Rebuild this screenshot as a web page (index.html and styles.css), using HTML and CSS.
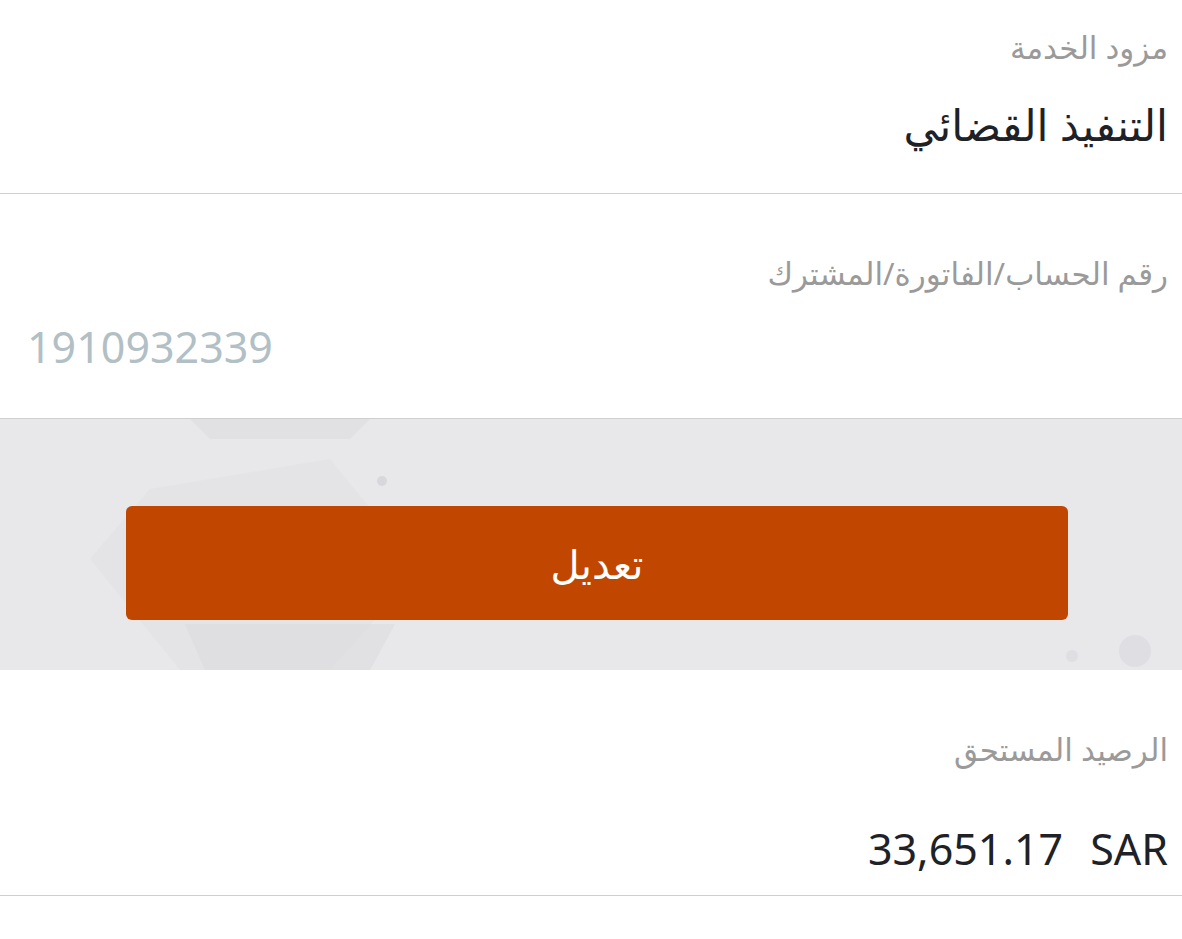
FILE: index.html
```html
<!DOCTYPE html>
<html lang="ar" dir="rtl">
<head>
  <meta charset="UTF-8">
  <title>تفاصيل الفاتورة</title>
  <link rel="stylesheet" href="styles.css">
</head>
<body>

  <div class="field">
    <div class="field-label">مزود الخدمة</div>
    <div class="field-value">التنفيذ القضائي</div>
  </div>

  <div class="field field-account">
    <div class="field-label">رقم الحساب/الفاتورة/المشترك</div>
    <div class="field-value account-number">1910932339</div>
  </div>

  <!-- action band with faint hexagon pattern -->
  <div class="action-band">
    <svg class="band-pattern" width="1182" height="251" viewBox="0 0 1182 251" aria-hidden="true">
      <polygon points="190,0 370,0 350,20 210,20" fill="#dcdce0" opacity="0.6"/>
      <polygon points="150,70 330,40 420,150 330,251 180,251 90,140" fill="#e0e0e4" opacity="0.45"/>
      <polygon points="185,205 395,205 370,251 205,251" fill="#dadade" opacity="0.5"/>
      <circle cx="382" cy="62" r="5" fill="#d8d8dc"/>
      <circle cx="1135" cy="232" r="16" fill="#dedee3"/>
      <circle cx="1072" cy="237" r="6" fill="#dedee3"/>
    </svg>
    <button class="edit-btn" type="button">تعديل</button>
  </div>

  <div class="field field-balance">
    <div class="field-label">الرصيد المستحق</div>
    <div class="field-value balance"><span>33,651.17</span><span>SAR</span></div>
  </div>

</body>
</html>
```

FILE: styles.css
```css
body {
  margin: 0;
  background: #fff;
  font-family: "Noto Sans", "DejaVu Sans", sans-serif;
  color: #222;
}

.field {
  padding: 22px 14px 0 14px;
  height: 194px;
  box-sizing: border-box;
  border-bottom: 1px solid #cfcfcf;
}

.field-label {
  font-size: 31px;
  color: #9a9a9a;
  line-height: 50px;
}

.field-value {
  font-size: 43px;
  color: #1e2226;
  line-height: 62px;
  margin-top: 22px;
}

.field-account {
  height: 225px;
  padding-top: 54px;
}

.account-number {
  direction: ltr;
  text-align: left;
  color: #b2bfc5;
  margin-top: 18px;
  padding-left: 13px;
}

.action-band {
  position: relative;
  height: 251px;
  box-sizing: border-box;
  padding: 87px 114px 0 126px;
  background: #e8e8ea;
  overflow: hidden;
}

.band-pattern {
  position: absolute;
  left: 0;
  top: 0;
}

.edit-btn {
  position: relative;
  display: block;
  width: 100%;
  height: 114px;
  border: none;
  border-radius: 6px;
  background: #c14600;
  color: #fff;
  font-family: inherit;
  font-size: 40px;
}

.field-balance {
  height: 226px;
  padding-top: 54px;
}

.balance {
  direction: ltr;
  text-align: right;
  margin-top: 44px;
  font-size: 43px;
}

.balance span + span {
  margin-left: 27px;
}
```
